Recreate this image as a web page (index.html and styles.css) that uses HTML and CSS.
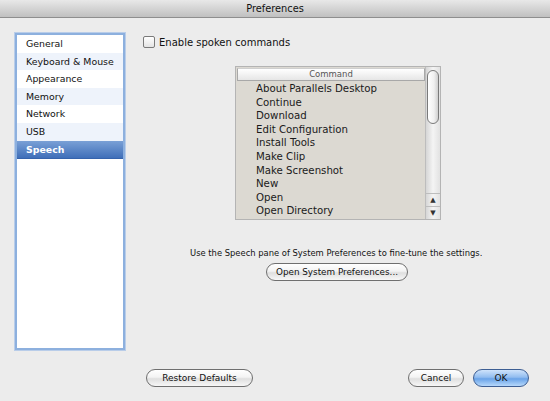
FILE: index.html
```html
<!DOCTYPE html>
<html>
<head>
<meta charset="utf-8">
<link rel="stylesheet" href="styles.css">
</head>
<body>
<div class="window">
  <div class="titlebar">Preferences</div>
  <div class="main">
    <div class="sidebar">
      <div class="item">General</div>
      <div class="item alt">Keyboard &amp; Mouse</div>
      <div class="item">Appearance</div>
      <div class="item alt">Memory</div>
      <div class="item">Network</div>
      <div class="item alt">USB</div>
      <div class="item selected">Speech</div>
    </div>
    <div class="pane">
      <label class="check"><span class="box"></span>Enable spoken commands</label>
      <div class="table">
        <div class="list">
          <div class="header">Command</div>
          <div class="rows">
            <div class="row">About Parallels Desktop</div>
            <div class="row">Continue</div>
            <div class="row">Download</div>
            <div class="row">Edit Configuration</div>
            <div class="row">Install Tools</div>
            <div class="row">Make Clip</div>
            <div class="row">Make Screenshot</div>
            <div class="row">New</div>
            <div class="row">Open</div>
            <div class="row">Open Directory</div>
          </div>
        </div>
        <div class="scrollbar">
          <div class="thumb"></div>
          <div class="arrows">
            <div class="arrow">&#9650;</div>
            <div class="arrow">&#9660;</div>
          </div>
        </div>
      </div>
      <div class="hint">Use the Speech pane of System Preferences to fine-tune the settings.</div>
      <button class="btn sysprefs">Open System Preferences...</button>
    </div>
  </div>
  <div class="footer">
    <button class="btn restore">Restore Defaults</button>
    <div class="right">
      <button class="btn cancel">Cancel</button>
      <button class="btn ok">OK</button>
    </div>
  </div>
</div>
</body>
</html>
```
FILE: styles.css
```css
html, body {
  margin: 0;
  padding: 0;
}
body {
  font-family: "DejaVu Sans", "Liberation Sans", sans-serif;
  font-size: 10px;
  color: #111;
  background: #ececec;
}
.window {
  width: 550px;
  height: 401px;
  background: #ececec;
  overflow: hidden;
}
.titlebar {
  height: 17px;
  line-height: 17px;
  text-align: center;
  font-size: 9.8px;
  color: #111;
  background: linear-gradient(#e8e8e8, #c0c0c0);
  border-bottom: 1px solid #8e8e8e;
}
.main {
  display: flex;
  padding-top: 15px;
  height: 317px;
}
.sidebar {
  margin-left: 15px;
  width: 106px;
  height: 313px;
  background: #fff;
  border: 2px solid #8db0de;
  box-shadow: 0 0 0 1px #b9cde9;
}
.item {
  height: 17.6px;
  line-height: 17.6px;
  padding-left: 9px;
  font-size: 9.4px;
  white-space: nowrap;
}
.item.alt {
  background: #eef3fb;
}
.item.selected {
  background: linear-gradient(#7aa0d6, #3f6fb9);
  color: #fff;
  font-weight: bold;
  border-bottom: 1px solid #3563ac;
  height: 17px;
  line-height: 17px;
}
.pane {
  margin-left: 18px;
  width: 390px;
  display: flex;
  flex-direction: column;
  align-items: flex-start;
}
.check {
  display: flex;
  align-items: center;
  margin-top: 3px;
  font-size: 10px;
  height: 12px;
  white-space: nowrap;
}
.box {
  width: 10px;
  height: 10px;
  border: 1px solid #7a7a7a;
  border-radius: 2px;
  background: linear-gradient(#fff, #e4e4e4);
  margin-right: 4px;
}
.table {
  margin-top: 18px;
  margin-left: 92px;
  width: 204px;
  height: 152px;
  display: flex;
  border: 1px solid #b4b4b4;
  background: #dcd9d2;
}
.list {
  flex: 1;
  display: flex;
  flex-direction: column;
}
.header {
  height: 11px;
  line-height: 11px;
  text-align: center;
  font-size: 8.5px;
  color: #555;
  background: linear-gradient(#fff, #e6e6e6);
  border: 1px solid #a8a8a8;
  border-top-color: #cfcfcf;
  margin: 1px 0 0 1px;
}
.rows {
  padding-top: 1px;
}
.row {
  height: 13.6px;
  line-height: 13.6px;
  padding-left: 20px;
  font-size: 10.2px;
  color: #1a1a1a;
  white-space: nowrap;
}
.scrollbar {
  width: 14px;
  background: linear-gradient(90deg, #d6d6d6, #f4f4f4 50%, #e2e2e2);
  border-left: 1px solid #bdbdbd;
  display: flex;
  flex-direction: column;
  justify-content: space-between;
}
.thumb {
  margin: 3px 1px 0;
  height: 52px;
  border-radius: 6px;
  background: linear-gradient(90deg, #fff, #f0f0f0 60%, #cfcfcf);
  border: 1px solid #7a7a7a;
}
.arrows {
  display: flex;
  flex-direction: column;
}
.arrow {
  height: 12px;
  line-height: 12px;
  font-size: 7px;
  text-align: center;
  color: #333;
  border-top: 1px solid #bdbdbd;
}
.hint {
  margin-top: 28px;
  margin-left: 47px;
  font-size: 8.4px;
  white-space: nowrap;
}
.btn {
  font-family: inherit;
  font-size: 9px;
  color: #111;
  height: 18px;
  padding: 0;
  white-space: nowrap;
  border: 1px solid #6f6f6f;
  border-radius: 9px;
  background: linear-gradient(#ffffff, #f3f3f3 45%, #dfdfdf 55%, #f7f7f7);
  line-height: 15px;
}
.sysprefs {
  margin-top: 5px;
  margin-left: 123px;
  width: 142px;
  font-size: 8.8px;
}
.footer {
  display: flex;
  justify-content: space-between;
  padding-top: 19px;
  padding-left: 146px;
  padding-right: 21px;
}
.restore {
  width: 107px;
}
.right {
  display: flex;
  gap: 9px;
}
.cancel {
  width: 56px;
}
.ok {
  width: 56px;
  border-color: #3d5e93;
  background: linear-gradient(#cfe3fb, #92bdf0 45%, #6aa3e8 55%, #b6d8fb);
}
```
